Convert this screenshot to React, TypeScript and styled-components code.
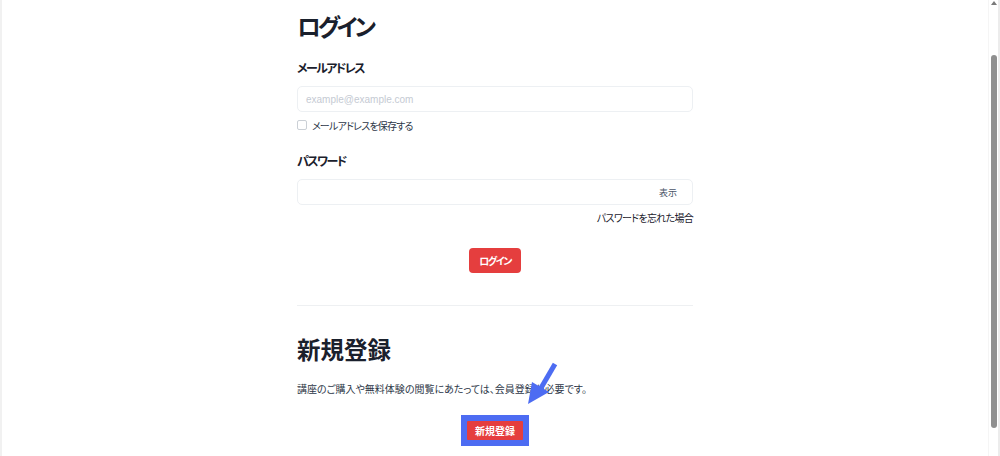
import React from "react";
import styled, { createGlobalStyle } from "styled-components";

const Global = createGlobalStyle`
  html, body { margin: 0; padding: 0; background: #fff; }
  body {
    font-family: "Noto Sans CJK JP", "Noto Sans", sans-serif;
    color: #1a202c;
    overflow: hidden;
    font-feature-settings: "palt";
  }
  * { box-sizing: border-box; }
`;

const Page = styled.div`
  display: flex;
  width: 1000px;
  height: 456px;
  overflow: hidden;
  border-left: 2px solid #f1f1f1;
`;

const Main = styled.main`
  flex: 1;
  display: flex;
  justify-content: center;
`;

const Content = styled.div`
  position: relative;
  width: 396px;
  display: flex;
  flex-direction: column;
  padding-top: 9px;
`;

const Heading = styled.h1<{ $mt?: number; $ls?: number }>`
  margin: ${(p) => p.$mt ?? 0}px 0 0;
  font-size: 23.5px;
  line-height: 34px;
  font-weight: 700;
  color: #1a202c;
  letter-spacing: ${(p) => p.$ls ?? 0}px;
  font-feature-settings: "palt";
`;

const Label = styled.label<{ $mt: number }>`
  margin-top: ${(p) => p.$mt}px;
  font-size: 12px;
  line-height: 18px;
  font-weight: 700;
  color: #1a202c;
  letter-spacing: -1.6px;
  font-feature-settings: "palt";
`;

const InputBox = styled.div`
  margin-top: 9px;
  height: 26px;
  border: 1px solid #edf0f3;
  border-radius: 5px;
  display: flex;
  align-items: center;
  padding: 0 8px;
  font-family: "Liberation Sans", Arial, sans-serif;
  font-size: 10px;
  color: #c5cad3;
`;

const Placeholder = styled.span`
  flex: 1;
`;

const ShowToggle = styled.span`
  font-family: "Noto Sans CJK JP", sans-serif;
  font-size: 9px;
  color: #4a5568;
  margin-right: 7px;
`;

const CheckRow = styled.div`
  margin-top: 5px;
  display: flex;
  align-items: center;
  gap: 5px;
  height: 16px;
  font-size: 10px;
  color: #2d3748;
  letter-spacing: -0.8px;
  font-feature-settings: "palt";
`;

const CheckBox = styled.span`
  width: 10px;
  height: 10px;
  border: 1px solid #cbd0d6;
  border-radius: 2px;
  background: #fff;
`;

const Forgot = styled.div`
  margin-top: 5px;
  align-self: flex-end;
  font-size: 10px;
  line-height: 16px;
  color: #1a202c;
  letter-spacing: -0.7px;
  font-feature-settings: "palt";
`;

const ButtonRow = styled.div<{ $mt: number }>`
  margin-top: ${(p) => p.$mt}px;
  display: flex;
  justify-content: center;
`;

const RedButton = styled.button<{ $w: number; $h: number; $ls?: number }>`
  width: ${(p) => p.$w}px;
  height: ${(p) => p.$h}px;
  border: none;
  border-radius: 4px;
  background: #e53e3e;
  color: #fff;
  font-family: "Noto Sans CJK JP", sans-serif;
  font-size: 10px;
  font-weight: 700;
  letter-spacing: ${(p) => p.$ls ?? 0}px;
  padding: 0;
  display: flex;
  align-items: center;
  justify-content: center;
  font-feature-settings: "palt";
`;

const Highlight = styled.div`
  width: 68px;
  height: 31px;
  background: #4d6cf2;
  display: flex;
  align-items: center;
  justify-content: center;
`;

const SquareRed = styled(RedButton)`
  border-radius: 1px;
`;

const Divider = styled.hr`
  margin: 32px 0 0;
  border: none;
  border-top: 1px solid #eef0f2;
  width: 100%;
`;

const Paragraph = styled.p`
  margin: 15px 0 0;
  font-size: 10px;
  line-height: 16px;
  color: #2d3748;
  font-feature-settings: "palt";
`;

const ArrowSvg = styled.svg`
  position: absolute;
  left: 228px;
  top: 360px;
  width: 34px;
  height: 48px;
  overflow: visible;
`;

const Track = styled.div`
  width: 12px;
  height: 456px;
  position: relative;
  background: #fff;
  border-left: 1px solid #f5f5f5;
  border-right: 2px solid #ececec;
  display: flex;
  flex-direction: column;
  align-items: center;
  padding-top: 55px;
`;

const UpArrow = styled.span`
  position: absolute;
  top: 1px;
  left: 2px;
  width: 0;
  height: 0;
  border-left: 3px solid transparent;
  border-right: 3px solid transparent;
  border-bottom: 4px solid #7a7a7a;
`;

const Thumb = styled.div`
  width: 6px;
  height: 373px;
  border-radius: 3px;
  background: #8f8f8f;
`;

export default function App() {
  return (
    <>
      <Global />
      <Page>
        <Main>
          <Content>
            <Heading $ls={-3.2}>ログイン</Heading>
            <Label $mt={16}>メールアドレス</Label>
            <InputBox>
              <Placeholder>example@example.com</Placeholder>
            </InputBox>
            <CheckRow>
              <CheckBox />
              <span>メールアドレスを保存する</span>
            </CheckRow>
            <Label $mt={19}>パスワード</Label>
            <InputBox>
              <Placeholder />
              <ShowToggle>表示</ShowToggle>
            </InputBox>
            <Forgot>パスワードを忘れた場合</Forgot>
            <ButtonRow $mt={22}>
              <RedButton $w={52} $h={25} $ls={-1.5}>ログイン</RedButton>
            </ButtonRow>
            <Divider />
            <Heading $mt={26}>新規登録</Heading>
            <Paragraph>講座のご購入や無料体験の閲覧にあたっては、会員登録が必要です。</Paragraph>
            <ButtonRow $mt={18}>
              <Highlight>
                <SquareRed $w={56} $h={19}>新規登録</SquareRed>
              </Highlight>
            </ButtonRow>
            <ArrowSvg viewBox="0 0 34 48">
              <line x1="30" y1="4" x2="16" y2="28" stroke="#4d6cf2" strokeWidth="5" strokeLinecap="butt" />
              <polygon points="3,44 7,22 24,32" fill="#4d6cf2" />
            </ArrowSvg>
          </Content>
        </Main>
        <Track>
          <UpArrow />
          <Thumb />
        </Track>
      </Page>
    </>
  );
}
